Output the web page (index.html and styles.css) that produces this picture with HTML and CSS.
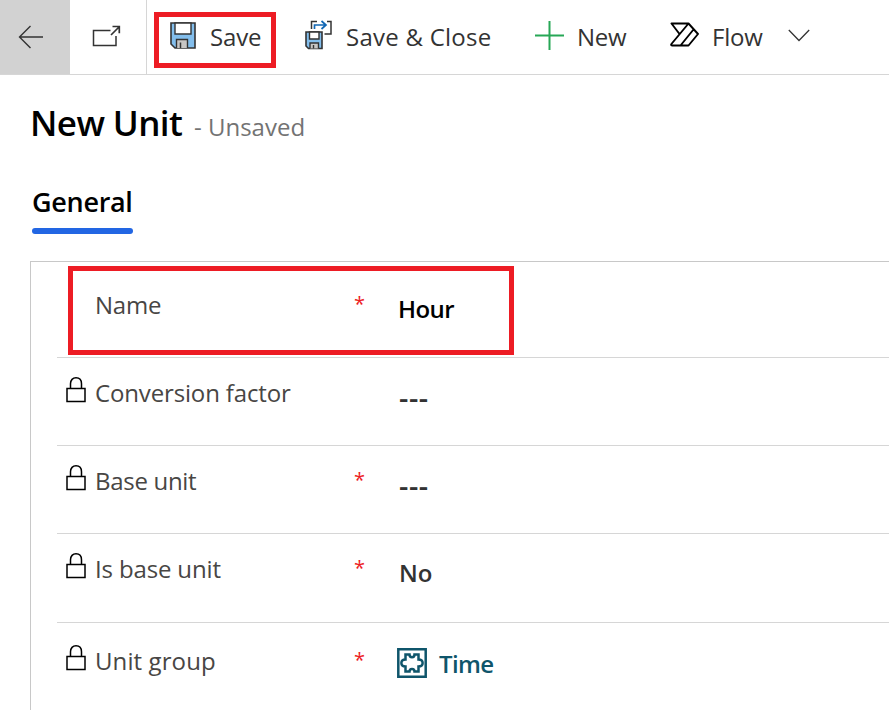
FILE: index.html
```html
<!DOCTYPE html>
<html lang="en">
<head>
<meta charset="utf-8">
<title>New Unit</title>
<link rel="stylesheet" href="styles.css">
</head>
<body>
<svg class="defs" width="0" height="0" aria-hidden="true">
  <symbol id="lock" viewBox="0 0 20 26">
    <path d="M1 11.500H19V24.500H1ZM4.500 11.500V6.800C4.500 3 6.800 .8 10 .8S15.500 3 15.500 6.800V11.500" fill="none" stroke="#000" stroke-width="1.500"/>
  </symbol>
</svg>
<header class="bar">
  <button class="back" aria-label="Back">
    <svg width="26" height="24" viewBox="0 0 26 24"><path d="M25 12H1.500M12.500 1L1.500 12L12.500 23" fill="none" stroke="#333" stroke-width="1.400"/></svg>
  </button>
  <button class="popout" aria-label="Open in new window">
    <svg width="29" height="22" viewBox="0 0 29 22"><path d="M18.500 5.500H1.500V20.500H24V11" fill="none" stroke="#333" stroke-width="1.500"/><path d="M19 10L27 2M20.500 1.500H27.300V8.300" fill="none" stroke="#333" stroke-width="1.700"/></svg>
  </button>
  <button class="cmd save">
    <svg width="26" height="27" viewBox="0 0 26 27"><path d="M1 1H25V26H5L1 22Z" fill="#83beec" stroke="#333" stroke-width="1.600"/><path d="M5 1H21V12H5Z" fill="#fff" stroke="#333" stroke-width="1.400"/><path d="M6.500 26V17.500H17.500V26" fill="#c8c6c4" stroke="#333" stroke-width="1.400"/><path d="M10.500 20.500V26" stroke="#333" stroke-width="1.500"/></svg>
    <span class="t-save">Save</span>
  </button>
  <button class="cmd close">
    <svg width="28" height="30" viewBox="0 0 28 30"><path d="M6.500 9V1.500H12M22 1.500H26V14H19.500" fill="none" stroke="#333" stroke-width="1.500"/><path d="M9.500 9V5H21M16.500 1L21 5L16.500 9" fill="none" stroke="#1267b4" stroke-width="1.700"/><path d="M1 12H17V28.500H3.500L1 26Z" fill="#83beec" stroke="#333" stroke-width="1.600"/><path d="M4.500 12H14V19H4.500Z" fill="#fff" stroke="#333" stroke-width="1.400"/><path d="M5 28.500V23H13.500V28.500" fill="#c8c6c4" stroke="#333" stroke-width="1.400"/><path d="M8.500 25V28.500" stroke="#333" stroke-width="1.400"/></svg>
    <span class="t-close">Save &amp; Close</span>
  </button>
  <button class="cmd new">
    <svg width="29" height="29" viewBox="0 0 29 29"><path d="M14.500 0V29M0 14.500H29" stroke="#27a756" stroke-width="2"/></svg>
    <span class="t-new">New</span>
  </button>
  <button class="cmd flow">
    <svg width="29" height="25" viewBox="0 0 29 25"><g fill="none" stroke="#000" stroke-width="1.900" stroke-linejoin="round" stroke-linecap="round"><path d="M2 1.500H18.500L28 12L18.500 23.500H2C1 23.500 .9 22.700 1.400 22L18.500 1.500M1.500 1.500L9.500 12M10.500 23.500L23.500 7.500"/></g></svg>
    <span class="t-flow">Flow</span>
    <svg class="chev" width="22" height="13" viewBox="0 0 22 13"><path d="M.8 1L11 11.500L21.200 1" fill="none" stroke="#333" stroke-width="1.300"/></svg>
  </button>
</header>
<main>
  <div class="heading"><h1>New Unit</h1><span class="status">- Unsaved</span></div>
  <nav><a class="tab">General</a></nav>
  <section class="card">
    <div class="row first">
      <span></span><span class="label l-name">Name</span><span class="req">*</span><span class="value hour">Hour</span>
      <div class="mark"></div>
    </div>
    <div class="row">
      <svg class="lock"><use href="#lock"/></svg><span class="label l-conv">Conversion factor</span><span></span><span class="value dash">---</span>
    </div>
    <div class="row">
      <svg class="lock"><use href="#lock"/></svg><span class="label l-base">Base unit</span><span class="req">*</span><span class="value dash">---</span>
    </div>
    <div class="row tall">
      <svg class="lock"><use href="#lock"/></svg><span class="label l-is">Is base unit</span><span class="req">*</span><span class="value no">No</span>
    </div>
    <div class="row last">
      <svg class="lock"><use href="#lock"/></svg><span class="label l-group">Unit group</span><span class="req">*</span>
      <span class="value link"><svg width="30" height="30" viewBox="0 0 30 30"><g fill="none" stroke="#0f556b" stroke-width="2.500"><path d="M1.300 1.300H28.700V28.700H1.300Z"/><path d="M8.500 6.500H12.500C12.500 10 17.500 10 17.500 6.500H21.500V11.500C27 11.500 27 18.500 21.500 18.500V23.500H17.500C17.500 20 12.500 20 12.500 23.500H8.500V18.500C3 18.500 3 11.500 8.500 11.500Z"/></g></svg><span class="t-time">Time</span></span>
    </div>
  </section>
</main>
</body>
</html>
```
FILE: styles.css
```css
* { box-sizing: border-box; }
body {
  margin: 0;
  height: 710px;
  overflow: hidden;
  background: #fff;
  color: #333;
  font: 24px/34px "Open Sans", "Noto Sans", sans-serif;
}
.defs { display: block; height: 0; }
svg { flex: none; display: block; }
button {
  border: 0;
  padding: 0;
  background: none;
  color: inherit;
  font: inherit;
  white-space: nowrap;
}
.bar { display: flex; height: 75px; border-bottom: 1px solid #d6d6d6; }
.back { width: 70px; background: #d2d2d2; padding: 0 0 1px 18px; }
.popout { width: 77px; border-right: 1px solid #d6d6d6; padding: 0 0 2px 22px; }
.cmd { display: flex; align-items: flex-start; }
.cmd span { margin-top: 20px; }
.save {
  width: 122px;
  height: 56px;
  margin: 12px 0 0 7px;
  border: 5px solid #ed1c24;
  padding: 5px 0 0 11px;
}
.save .t-save { margin: -2px 0 0 14px; letter-spacing: -.15px; }
.close { margin-left: 29px; width: 230px; }
.close svg { margin-top: 20px; }
.close span { margin-left: 13px; letter-spacing: .25px; }
.new { width: 135px; }
.new svg { margin-top: 21px; }
.new span { margin-left: 13px; letter-spacing: -.3px; }
.flow svg { margin-top: 22px; }
.flow span { margin-left: 13px; width: 76px; text-align: left; letter-spacing: -.2px; }
.flow .chev { margin-top: 29px; }
.heading { display: flex; align-items: baseline; padding: 23px 0 0 30px; height: 96px; }
h1 { margin: 0; font-size: 35px; line-height: 50px; font-weight: 600; color: #000; width: 164px; white-space: nowrap; letter-spacing: -.6px; }
.status { color: #737373; }
nav { height: 90px; padding: 11px 0 0 32px; }
.tab {
  display: block;
  width: 101px;
  height: 52px;
  position: relative;
  font-size: 27px;
  line-height: 39px;
  font-weight: 600;
  letter-spacing: -.3px;
  color: #000;
}
.tab::after { content: ""; position: absolute; left: 0; bottom: 0; width: 101px; height: 6px; border-radius: 3px; background: #2266e3; }
.card {
  margin-left: 30px;
  height: 460px;
  padding-left: 26px;
  border: solid #c8c8c8;
  border-width: 1px 0 0 1px;
}
.row {
  display: grid;
  grid-template-columns: 29px 260px 43px 1fr;
  align-items: start;
  height: 88px;
  padding: 18px 0 0 9px;
  border-bottom: 1px solid #d6d6d6;
  white-space: nowrap;
}
.first { position: relative; height: 96px; padding-top: 26px; }
.tall { height: 89px; }
.last { padding-top: 21px; border: 0; }
.lock { width: 20px; height: 26px; margin-top: 1px; }
.label { color: #484644; letter-spacing: -.15px; }
.l-name { letter-spacing: -.2px; }
.l-base { letter-spacing: -.3px; }
.l-group { letter-spacing: .1px; }
.req { color: #ed1c24; font-size: 20px; margin: -1px 0 0 -1px; }
.value { margin-top: 4px; font-weight: 600; }
.hour { color: #000; letter-spacing: -.6px; }
.dash { font-size: 29px; letter-spacing: .6px; margin: 4px 0 0 1px; }
.no { padding-left: 1px; }
.link { display: flex; color: #0f556b; margin-top: 3px; }
.link svg { margin: 1px 12px 0 -1px; }
.t-time { letter-spacing: -.6px; }
.mark { position: absolute; left: 11px; top: 4px; width: 446px; height: 89px; border: 5px solid #ed1c24; }
```
